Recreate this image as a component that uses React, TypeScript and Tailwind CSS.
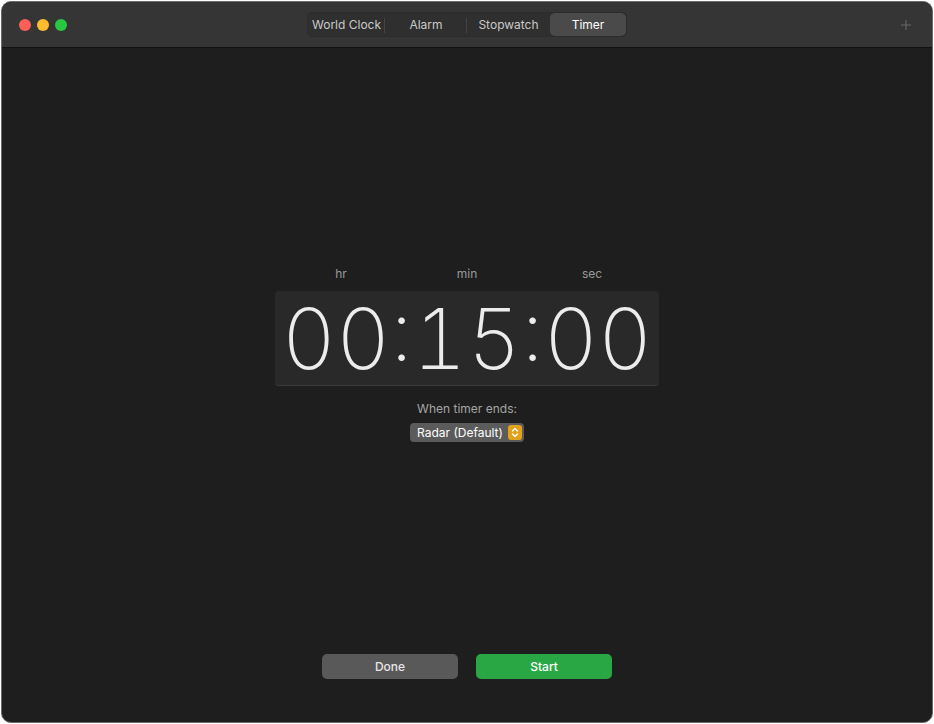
import { Plus } from "lucide-react"

const tabs = [
    { name: "World Clock", w: "w-[77px]" },
    { name: "Alarm", w: "w-[82px]" },
    { name: "Stopwatch", w: "w-[83px]" },
    { name: "Timer", w: "w-[76px]" },
]

export default function App() {
    return (
        <div className="w-[934px] h-[724px] bg-white p-px font-['Inter','Liberation_Sans',sans-serif]">
            <div className="flex h-full flex-col overflow-hidden rounded-[10px] border border-[#6b6b6b] bg-[#1e1e1e]">
                {/* Title bar */}
                <div className="relative flex h-[46px] shrink-0 items-center border-b border-[#121212] bg-[#353535]">
                    <div className="flex items-center gap-[6px] pl-[17px]">
                        <span className="h-3 w-3 rounded-full bg-[#fe5f57]" />
                        <span className="h-3 w-3 rounded-full bg-[#febc2e]" />
                        <span className="h-3 w-3 rounded-full bg-[#28c840]" />
                    </div>
                    <div className="absolute left-[305px] top-[10px] flex h-[25px] items-center rounded-[5px] border border-[#2c2c2c] bg-[#2f2f2f] text-[12px] text-[#c9c9c9]">
                        {tabs.map((t, i) => (
                            <div key={t.name} className={`relative flex h-full items-center ${t.w}`}>
                                <div
                                    className={`flex h-full flex-1 items-center justify-center ${
                                        t.name === "Timer" ? "rounded-[5px] bg-[#4a4a4a] text-white" : ""
                                    }`}
                                >
                                    {t.name}
                                </div>
                                {i < 2 && <span className="absolute right-0 top-[5px] h-[15px] w-px bg-[#444]" />}
                            </div>
                        ))}
                    </div>
                    <Plus className="ml-auto mr-[18px] h-[16px] w-[16px] text-[#6a6a6a]" strokeWidth={1.5} />
                </div>

                {/* Body */}
                <div className="flex flex-1 flex-col items-center">
                    <div className="mt-[217px] grid w-[384px] grid-cols-[132px_120px_130px] text-center text-[12px] text-[#9a9a9a]">
                        <span>hr</span>
                        <span>min</span>
                        <span>sec</span>
                    </div>
                    <div className="mt-[8px] flex h-[95px] w-[384px] items-center justify-center rounded-[4px] border-b border-[#3a3a3a] bg-[#292929]">
                        <span className="pt-[2px] text-[84px] font-extralight leading-none text-[#ececec] [font-feature-settings:'case','tnum']">
                            00:15:00
                        </span>
                    </div>
                    <p className="mt-[14px] text-[12px] text-[#a5a5a5]">When timer ends:</p>
                    <div className="mt-[5px] flex h-[19px] w-[114px] items-center justify-between rounded-[4px] bg-[#5b5b5b] pl-[7px] pr-[2px] text-[12px] text-white">
                        <span>Radar (Default)</span>
                        <span className="flex h-[15px] w-[14px] items-center justify-center rounded-[3px] bg-[#e3a21a]">
                            <svg width="8" height="11" viewBox="0 0 8 11" fill="none" stroke="white" strokeWidth="1.4" strokeLinecap="round" strokeLinejoin="round">
                                <path d="M1.5 4 L4 1.5 L6.5 4" />
                                <path d="M1.5 7 L4 9.5 L6.5 7" />
                            </svg>
                        </span>
                    </div>

                    <div className="mt-auto mb-[43px] flex gap-[18px] text-[12px] font-medium text-white">
                        <button className="h-[25px] w-[136px] rounded-[5px] bg-[#595959] text-[#e6e6e6]">Done</button>
                        <button className="h-[25px] w-[136px] rounded-[5px] bg-[#29a744]">Start</button>
                    </div>
                </div>
            </div>
        </div>
    )
}
